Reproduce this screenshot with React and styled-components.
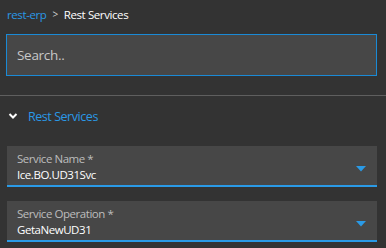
import React from "react";
import styled, { createGlobalStyle } from "styled-components";

const Global = createGlobalStyle`
  html, body { margin: 0; padding: 0; background: #333333; }
  body { font-family: "Open Sans", "Noto Sans", sans-serif; }
  #root { width: 386px; height: 248px; overflow: hidden; background: #333333; }
`;

const Page = styled.div`
  display: flex;
  flex-direction: column;
`;

const Top = styled.div`
  padding: 0 9px 0 6px;
  display: flex;
  flex-direction: column;
`;

const Crumbs = styled.nav`
  display: flex;
  align-items: center;
  gap: 6px;
  height: 28px;
  padding-left: 1px;
  font-size: 11.5px;
  letter-spacing: -0.4px;
`;

const CrumbLink = styled.span`
  color: ${(p) => (p.$active ? "#ffffff" : "#2a98e6")};
`;

const Sep = styled.span`
  color: #cfcfcf;
  font-size: 10px;
`;

const SearchBox = styled.input`
  margin-top: 6px;
  box-sizing: border-box;
  height: 42px;
  width: 100%;
  background: #474747;
  border: 1px solid #1a8ad6;
  outline: none;
  padding: 0 10px;
  color: #fff;
  font-family: inherit;
  font-size: 13.5px;
  letter-spacing: -0.3px;
  &::placeholder { color: #c8c8c8; }
`;

const Divider = styled.hr`
  margin: 19px 0 0 0;
  border: none;
  height: 1px;
  background: #5f5f5f;
`;

const Section = styled.div`
  padding: 0 9px 0 7px;
  display: flex;
  flex-direction: column;
`;

const SectionHead = styled.div`
  display: flex;
  align-items: center;
  gap: 10px;
  height: 40px;
  padding-left: 1px;
  color: #2a98e6;
  font-size: 12.5px;
  letter-spacing: -0.45px;
`;

const Field = styled.div`
  position: relative;
  box-sizing: border-box;
  height: 41px;
  background: #474747;
  border-bottom: 2px solid #2a9ae6;
  padding: 5px 10px 0 10px;
  margin-top: ${(p) => p.$mt}px;
  display: flex;
  flex-direction: column;
`;

const Label = styled.div`
  color: #bdbdbd;
  font-size: 11.5px;
  line-height: 16px;
  letter-spacing: -0.45px;
`;

const Value = styled.div`
  color: #ffffff;
  font-size: 11.5px;
  line-height: 16px;
  letter-spacing: -0.45px;
`;

const Caret = styled.svg`
  position: absolute;
  right: 11px;
  top: 20px;
`;

const Chevron = () => (
  <svg width="10" height="8" viewBox="0 0 10 8">
    <path d="M1.5 2 L5 5.5 L8.5 2" fill="none" stroke="#ffffff" strokeWidth="2" />
  </svg>
);

const SelectField = ({ label, value, mt }) => (
  <Field $mt={mt}>
    <Label>{label} *</Label>
    <Value>{value}</Value>
    <Caret width="10" height="6" viewBox="0 0 10 6">
      <path d="M0 0 H10 L5 5.5 Z" fill="#2a9ae6" />
    </Caret>
  </Field>
);

export default function App() {
  return (
    <Page>
      <Global />
      <Top>
        <Crumbs>
          <CrumbLink>rest-erp</CrumbLink>
          <Sep>&gt;</Sep>
          <CrumbLink $active>Rest Services</CrumbLink>
        </Crumbs>
        <SearchBox placeholder="Search.." />
      </Top>
      <Divider />
      <Section>
        <SectionHead>
          <Chevron />
          <span>Rest Services</span>
        </SectionHead>
        <SelectField label="Service Name" value="Ice.BO.UD31Svc" mt={10} />
        <SelectField label="Service Operation" value="GetaNewUD31" mt={14} />
      </Section>
    </Page>
  );
}
